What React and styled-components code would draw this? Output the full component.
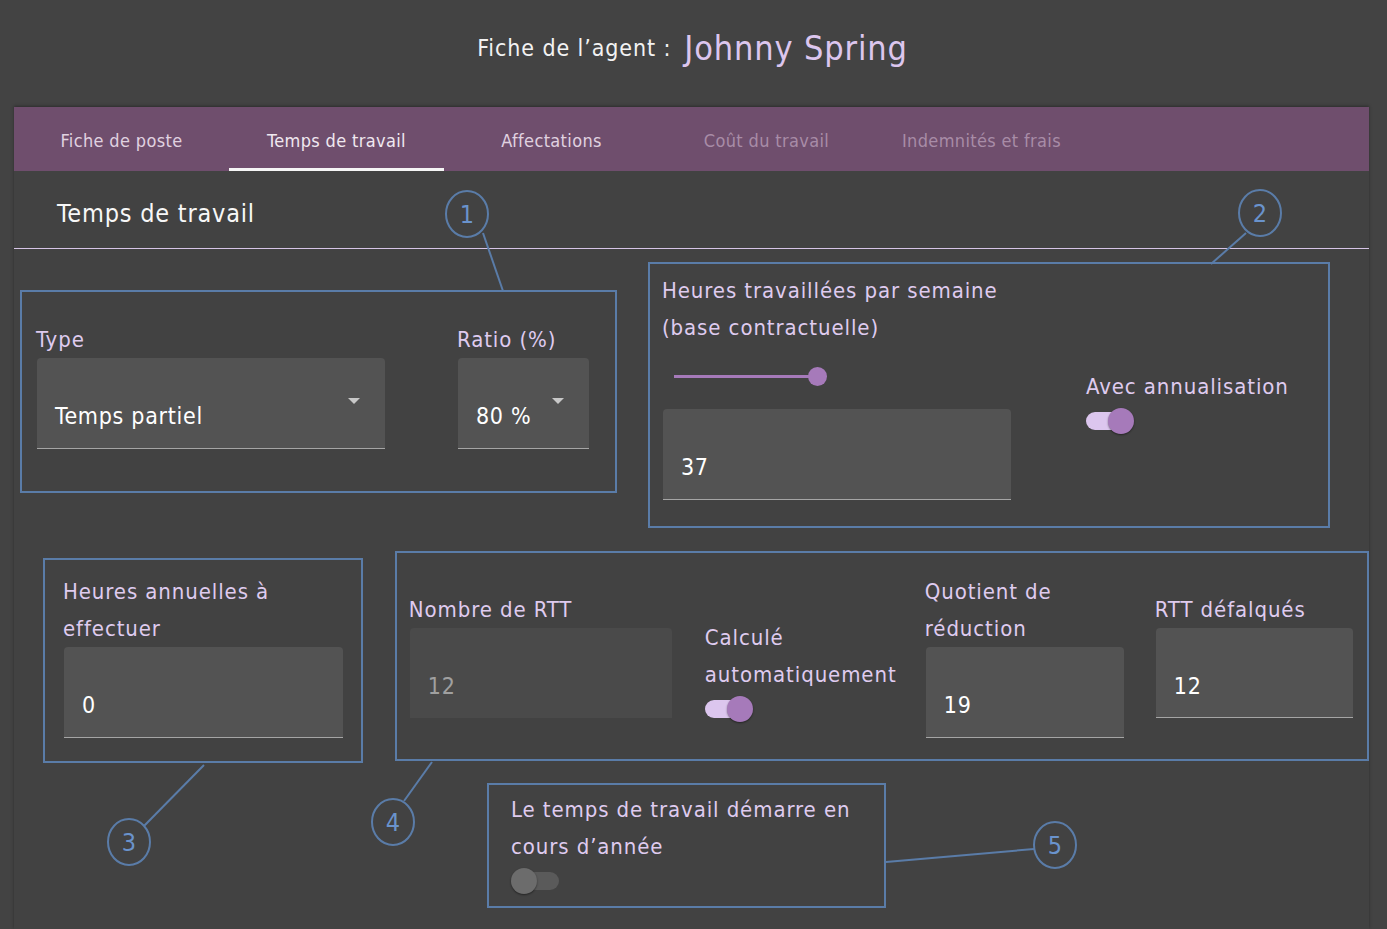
import React from 'react';
import styled, { createGlobalStyle } from 'styled-components';

const GlobalStyle = createGlobalStyle`
    body {
        margin: 0;
        background: #434343;
        font-family: 'DejaVu Sans Condensed', 'DejaVu Sans', sans-serif;
    }
`;

const Page = styled.div`
    position: relative;
    width: 1387px;
    height: 929px;
    overflow: hidden;
    background: #434343;
`;

const TitleBar = styled.div`
    height: 107px;
    display: flex;
    align-items: center;
    justify-content: center;
    gap: 13px;
    padding: 0 2px 12px 0;
    box-sizing: border-box;
`;

const TitleLabel = styled.span`
    color: #f2f2f2;
    font-size: 23px;
    letter-spacing: 0.9px;
`;

const AgentName = styled.span`
    color: #dcc6ee;
    font-size: 34px;
    letter-spacing: 0.85px;
`;

const Card = styled.div`
    margin: 0 18px 0 14px;
    height: 822px;
    background: #424242;
    box-shadow: 0 -1px 3px rgba(0, 0, 0, 0.35);
`;

const TabBar = styled.div`
    display: flex;
    height: 64px;
    background: #6f4e6d;
`;

const Tab = styled.div`
    width: 215px;
    display: flex;
    align-items: center;
    justify-content: center;
    font-size: 18px;
    letter-spacing: 0.35px;
    color: ${(p) => (p.$disabled ? '#a88ca7' : p.$active ? '#f0e8f0' : '#e0d2e0')};
    border-bottom: 3px solid ${(p) => (p.$active ? '#f5f5f5' : 'transparent')};
    box-sizing: border-box;
    padding-top: 6px;
`;

const SectionHeader = styled.div`
    height: 78px;
    display: flex;
    align-items: center;
    padding: 8px 0 0 43px;
    border-bottom: 1px solid #d6c4e6;
    box-sizing: border-box;
    color: #f7f7f7;
    font-size: 25px;
    letter-spacing: 0.8px;
`;

const Row = styled.div`
    display: flex;
    align-items: flex-start;
`;

const Group = styled.div`
    box-sizing: border-box;
    width: ${(p) => p.$w}px;
    height: ${(p) => p.$h}px;
    margin-top: ${(p) => p.$mt}px;
    margin-left: ${(p) => p.$ml}px;
    padding: ${(p) => p.$pad};
    border: 2px solid #5a7ca8;
    display: flex;
    align-items: flex-start;
`;

const Column = styled.div`
    display: flex;
    flex-direction: column;
    width: ${(p) => (p.$w ? `${p.$w}px` : 'auto')};
    margin-top: ${(p) => p.$mt || 0}px;
    margin-left: ${(p) => p.$ml || 0}px;
`;

const Label = styled.div`
    color: #dfcbef;
    font-size: 22px;
    line-height: 37px;
    letter-spacing: 0.9px;
    white-space: nowrap;
`;

const Field = styled.div`
    position: relative;
    box-sizing: border-box;
    width: ${(p) => p.$w}px;
    height: ${(p) => p.$h || 91}px;
    margin-left: 1px;
    background: ${(p) => (p.$disabled ? '#4a4a4a' : '#535353')};
    border-radius: 4px 4px 0 0;
    border-bottom: 1px solid ${(p) => (p.$disabled ? 'transparent' : '#a5a5a5')};
    padding: 40px 0 0 18px;
    color: ${(p) => (p.$disabled ? '#a0a0a0' : '#ffffff')};
    font-size: 23px;
    line-height: 36px;
    letter-spacing: 0.7px;
`;

const Arrow = styled.span`
    position: absolute;
    right: ${(p) => p.$right}px;
    top: 40px;
    width: 0;
    height: 0;
    border-left: 6px solid transparent;
    border-right: 6px solid transparent;
    border-top: 6px solid #c8c8c8;
`;

const SliderBox = styled.div`
    position: relative;
    height: 63px;
    width: 160px;
    margin-left: 12px;
`;

const SliderTrack = styled.div`
    position: absolute;
    left: 0;
    top: 29px;
    width: 143px;
    height: 3px;
    background: #a67aba;
`;

const SliderThumb = styled.div`
    position: absolute;
    left: 134px;
    top: 21px;
    width: 19px;
    height: 19px;
    border-radius: 50%;
    background: #a67aba;
`;

const Switch = styled.div`
    position: relative;
    width: 48px;
    height: 32px;
`;

const SwitchTrack = styled.div`
    position: absolute;
    left: 0;
    top: 7px;
    width: ${(p) => (p.$on ? 46 : 48)}px;
    height: 18px;
    border-radius: 9px;
    background: ${(p) => (p.$on ? '#dcc6ee' : '#5a5a5a')};
`;

const SwitchThumb = styled.div`
    position: absolute;
    top: 3px;
    left: ${(p) => (p.$on ? 22 : 0)}px;
    width: 26px;
    height: 26px;
    border-radius: 50%;
    background: ${(p) => (p.$on ? '#a67aba' : '#6c6c6c')};
    box-shadow: 0 1px 2px rgba(0, 0, 0, 0.45);
`;

const Overlay = styled.svg`
    position: absolute;
    left: 0;
    top: 0;
    pointer-events: none;
`;

const Toggle = ({ on }) => (
    <Switch>
        <SwitchTrack $on={on} />
        <SwitchThumb $on={on} />
    </Switch>
);

const markers = [
    { n: 1, cx: 467, cy: 214, line: [483, 233, 503, 291] },
    { n: 2, cx: 1260, cy: 213, line: [1246, 233, 1211, 264] },
    { n: 3, cx: 129, cy: 842, line: [144, 826, 204, 765] },
    { n: 4, cx: 393, cy: 822, line: [404, 801, 432, 762] },
    { n: 5, cx: 1055, cy: 845, line: [1034, 849, 886, 862] },
];

const tabs = [
    { label: 'Fiche de poste' },
    { label: 'Temps de travail', active: true },
    { label: 'Affectations' },
    { label: 'Coût du travail', disabled: true },
    { label: 'Indemnités et frais', disabled: true },
];

export default function App() {
    return (
        <Page>
            <GlobalStyle />
            <TitleBar>
                <TitleLabel>Fiche de l’agent :</TitleLabel>
                <AgentName>Johnny Spring</AgentName>
            </TitleBar>
            <Card>
                <TabBar>
                    {tabs.map((t) => (
                        <Tab key={t.label} $active={t.active} $disabled={t.disabled}>
                            {t.label}
                        </Tab>
                    ))}
                </TabBar>
                <SectionHeader>Temps de travail</SectionHeader>

                <Row>
                    <Group $w={597} $h={203} $mt={41} $ml={6} $pad="29px 0 0 14px">
                        <Column $w={348}>
                            <Label>Type</Label>
                            <Field $w={348}>
                                Temps partiel
                                <Arrow $right={25} />
                            </Field>
                        </Column>
                        <Column $ml={73}>
                            <Label>Ratio (%)</Label>
                            <Field $w={131}>
                                80 %
                                <Arrow $right={25} />
                            </Field>
                        </Column>
                    </Group>

                    <Group $w={682} $h={266} $mt={13} $ml={31} $pad="8px 0 0 12px">
                        <Column $w={424}>
                            <Label>
                                Heures travaillées par semaine
                                <br />
                                (base contractuelle)
                            </Label>
                            <SliderBox>
                                <SliderTrack />
                                <SliderThumb />
                            </SliderBox>
                            <Field $w={348} $h={91}>
                                37
                            </Field>
                        </Column>
                        <Column $mt={96}>
                            <Label>Avec annualisation</Label>
                            <Toggle on />
                        </Column>
                    </Group>
                </Row>

                <Row>
                    <Group $w={320} $h={205} $mt={30} $ml={29} $pad="13px 0 0 18px">
                        <Column>
                            <Label>
                                Heures annuelles à
                                <br />
                                effectuer
                            </Label>
                            <Field $w={279}>0</Field>
                        </Column>
                    </Group>

                    <Group $w={975} $h={210} $mt={23} $ml={32} $pad="0 0 0 12px">
                        <Column $w={296} $mt={38}>
                            <Label>Nombre de RTT</Label>
                            <Field $w={262} $h={90} $disabled>
                                12
                            </Field>
                        </Column>
                        <Column $w={220} $mt={66}>
                            <Label>
                                Calculé
                                <br />
                                automatiquement
                            </Label>
                            <Toggle on />
                        </Column>
                        <Column $w={230} $mt={20}>
                            <Label>
                                Quotient de
                                <br />
                                réduction
                            </Label>
                            <Field $w={198}>19</Field>
                        </Column>
                        <Column $mt={38}>
                            <Label>RTT défalqués</Label>
                            <Field $w={197} $h={90}>
                                12
                            </Field>
                        </Column>
                    </Group>
                </Row>

                <Row>
                    <Group $w={399} $h={125} $mt={20} $ml={473} $pad="6px 0 0 22px">
                        <Column>
                            <Label>
                                Le temps de travail démarre en
                                <br />
                                cours d’année
                            </Label>
                            <Toggle on={false} />
                        </Column>
                    </Group>
                </Row>
            </Card>

            <Overlay width="1387" height="929" viewBox="0 0 1387 929">
                {markers.map((m) => (
                    <g key={m.n} stroke="#5a7ca8" strokeWidth="2" fill="none">
                        <line x1={m.line[0]} y1={m.line[1]} x2={m.line[2]} y2={m.line[3]} />
                        <ellipse cx={m.cx} cy={m.cy} rx="21" ry="23" />
                        <text
                            x={m.cx}
                            y={m.cy + 9}
                            textAnchor="middle"
                            fill="#6a93cc"
                            stroke="none"
                            fontSize="25"
                            fontFamily="'DejaVu Sans Condensed', 'DejaVu Sans', sans-serif"
                        >
                            {m.n}
                        </text>
                    </g>
                ))}
            </Overlay>
        </Page>
    );
}
